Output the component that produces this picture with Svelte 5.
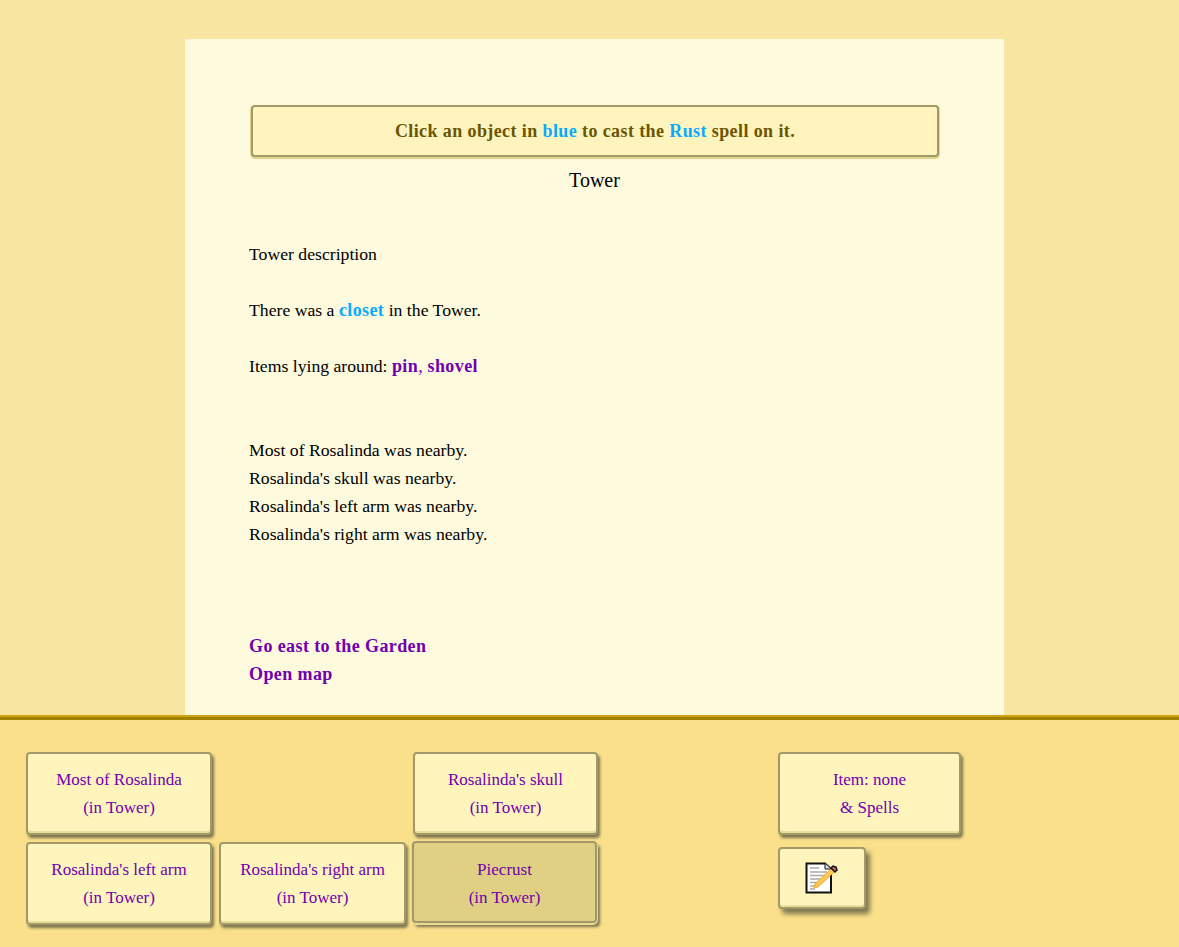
<script>
	const row1 = [
		{ name: 'Most of Rosalinda', col: 1 },
		{ name: "Rosalinda's skull", col: 3 }
	]
	const row2 = [
		{ name: "Rosalinda's left arm", col: 1 },
		{ name: "Rosalinda's right arm", col: 2 },
		{ name: 'Piecrust', col: 3, selected: true }
	]
	const people = [...row1.map((b) => ({ ...b, row: 1 })), ...row2.map((b) => ({ ...b, row: 2 }))]
</script>

<div class="page">
	<div class="scroll">
		<main class="story">
			<div class="hint">
				Click an object in <span class="blue">blue</span> to cast the
				<span class="blue">Rust</span> spell on it.
			</div>
			<h1>Tower</h1>
			<p class="first">Tower description</p>
			<p>There was a <b class="blue">closet</b> in the Tower.</p>
			<p>Items lying around: <b class="link">pin</b><b class="comma">,</b> <b class="link">shovel</b></p>
			<p class="gap2">
				Most of Rosalinda was nearby.<br />
				Rosalinda's skull was nearby.<br />
				Rosalinda's left arm was nearby.<br />
				Rosalinda's right arm was nearby.
			</p>
			<p class="gap3">
				<b class="link">Go east to the Garden</b><br />
				<b class="link">Open map</b>
			</p>
		</main>
	</div>
	<footer>
		<div class="people">
			{#each people as p}
				<button
					class="btn"
					class:selected={p.selected}
					style="grid-column: {p.col}; grid-row: {p.row}"
				>
					{p.name}<br />(in Tower)
				</button>
			{/each}
		</div>
		<div class="side">
			<button class="btn item">Item: none<br />&amp; Spells</button>
			<button class="btn notes" aria-label="Notes">
				<svg width="34" height="32" viewBox="0 0 34 32">
					<path d="M1.500 1.500H20L26 7V30.500H1.500Z" fill="#fff" stroke="#111" stroke-width="2" />
					<path d="M20 1.500V7H26" fill="#ddd" stroke="#111" stroke-width="1" />
					<path
						d="M5 6h9M5 10h17M5 13.500h17M5 17h15M5 20.500h11M5 24h9M5 27h5"
						stroke="#aaa"
						stroke-width="1.500"
						fill="none"
					/>
					<path d="M9 26l1-4L26 7l3 3L13 25Z" fill="#fdc94e" stroke="#e8a830" stroke-width="1" />
					<path d="M26 6l2-2 3 1 1 3-2 2Z" fill="#c06a60" stroke="#111" stroke-width="1.500" />
				</svg>
			</button>
		</div>
	</footer>
</div>

<style>
	:global(body) {
		margin: 0;
		background: #f8e5a2;
		font-family: 'Liberation Serif', serif;
		font-size: 17.7px;
		line-height: 28px;
		color: #000;
	}

	.page {
		display: flex;
		flex-direction: column;
		height: 947px;
		overflow: hidden;
	}

	.scroll {
		height: 715px;
		padding-top: 39px;
		box-sizing: border-box;
		overflow: hidden;
	}

	.story {
		width: 819px;
		height: 676px;
		box-sizing: border-box;
		margin-left: 185px;
		padding: 65px 64px 0;
		background: #fdfade;
	}

	.hint {
		height: 52px;
		box-sizing: border-box;
		margin: 1px 1px 2px 2px;
		background: #fff4bd;
		border: 2px solid #a39b65;
		border-radius: 4px;
		box-shadow: 0 1px 0 1px #e2d488;
		color: #6b5500;
		font-size: 18px;
		font-weight: bold;
		letter-spacing: 0.4px;
		line-height: 49px;
		text-align: center;
	}

	b {
		font-size: 18px;
		letter-spacing: 0.4px;
	}

	.blue {
		color: #0aaaff;
		font-weight: bold;
	}

	.link {
		color: #7000b0;
	}

	.comma {
		color: #7000b0;
		font-weight: normal;
	}

	h1 {
		margin: 8px 0 0;
		font-size: 20px;
		font-weight: normal;
		line-height: 30px;
		text-align: center;
	}

	p {
		margin: 28px 0 0;
	}

	p.first {
		margin-top: 45px;
	}

	p.gap2 {
		margin-top: 56px;
	}

	p.gap3 {
		margin-top: 84px;
	}

	footer {
		flex: 1;
		display: flex;
		align-items: flex-start;
		gap: 180px;
		padding: 37px 0 0 26px;
		background: linear-gradient(#d2a616, #c89e14 2.500px, #a38100 2.500px, #a38100 5px, #fae08a 5px);
	}

	.people {
		display: grid;
		grid-template-columns: 186px 187px 185px;
		grid-template-rows: 83px 83px;
		gap: 7px;
	}

	.btn {
		box-sizing: border-box;
		padding: 0;
		background: #fff4bc;
		border: 2px solid #a19a68;
		border-radius: 4px;
		box-shadow: inset 0 -2px 0 #eadc9a, 2px 3px 3px #7d7650;
		color: #7000b0;
		font-family: 'Liberation Serif', serif;
		font-size: 17px;
		line-height: 28px;
	}

	.selected {
		margin: -1px 1px 2px -1px;
		padding-top: 4px;
		background: #e0d083;
		box-shadow: 0 1px 0 1px #e8dc90, 3px 4px 3px #7d7650;
	}

	.side {
		display: flex;
		flex-direction: column;
		align-items: flex-start;
		gap: 12px;
	}

	.item {
		width: 183px;
		height: 83px;
	}

	.notes {
		width: 88px;
		height: 62px;
		display: flex;
		align-items: center;
		justify-content: center;
		box-shadow: inset 0 -2px 0 #eadc9a, 4px 5px 5px #7d7650;
	}
</style>
